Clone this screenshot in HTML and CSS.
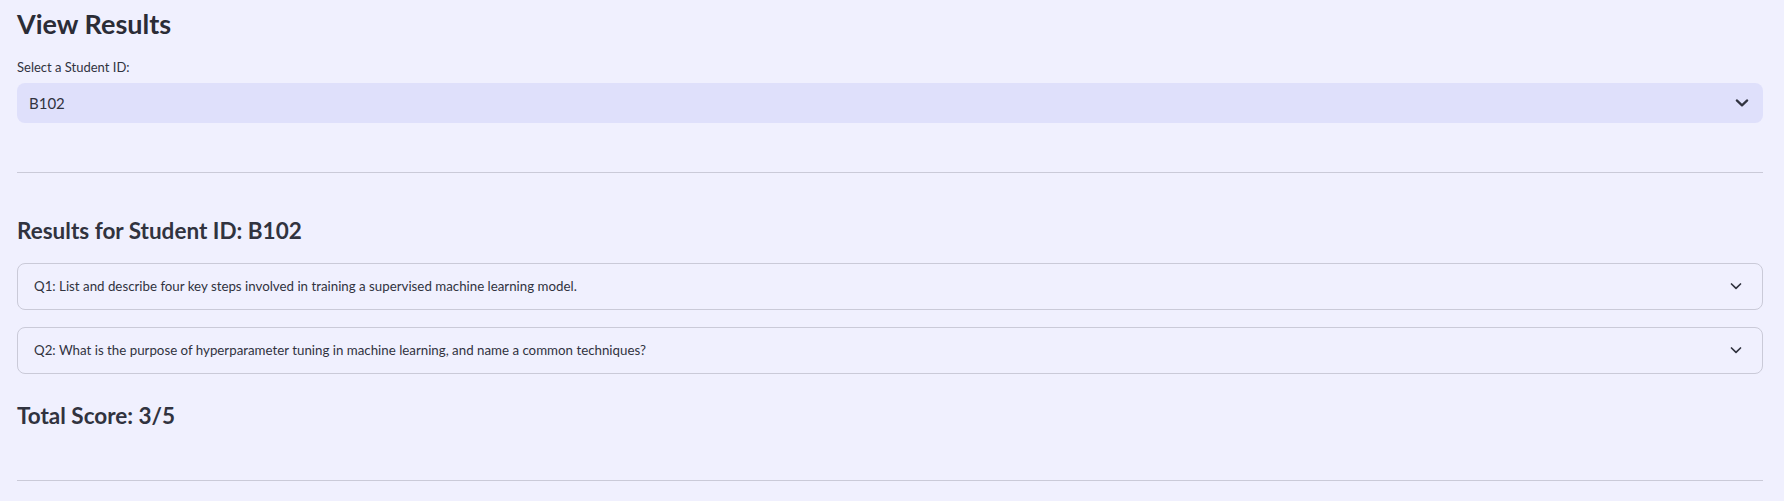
FILE: index.html
```html
<!DOCTYPE html>
<html lang="en">
<head>
<meta charset="utf-8">
<title>View Results</title>
<link rel="stylesheet" href="styles.css">
</head>
<body>
<main class="app">
  <h1 class="title">View Results</h1>
  <label class="field-label" for="student">Select a Student ID:</label>
  <div class="select" id="student">
    <span class="select-value">B102</span>
    <svg class="select-icon" width="20" height="20" viewBox="0 0 20 20" aria-hidden="true">
      <polyline points="4.8,7.4 10,12.4 15.2,7.4" fill="none" stroke="#31333f" stroke-width="2.2" stroke-linecap="round" stroke-linejoin="round"/>
    </svg>
  </div>
  <hr class="divider divider-top">
  <h2 class="heading results-heading">Results for Student ID: B102</h2>
  <div class="expander expander-first">
    <span class="expander-label">Q1: List and describe four key steps involved in training a supervised machine learning model.</span>
    <svg class="expander-icon" width="20" height="20" viewBox="0 0 20 20" aria-hidden="true">
      <polyline points="5.5,8 10,12.3 14.5,8" fill="none" stroke="#31333f" stroke-width="1.7" stroke-linecap="round" stroke-linejoin="round"/>
    </svg>
  </div>
  <div class="expander expander-next">
    <span class="expander-label">Q2: What is the purpose of hyperparameter tuning in machine learning, and name a common techniques?</span>
    <svg class="expander-icon" width="20" height="20" viewBox="0 0 20 20" aria-hidden="true">
      <polyline points="5.5,8 10,12.3 14.5,8" fill="none" stroke="#31333f" stroke-width="1.7" stroke-linecap="round" stroke-linejoin="round"/>
    </svg>
  </div>
  <h2 class="heading total-heading">Total Score: 3/5</h2>
  <hr class="divider divider-bottom">
</main>
</body>
</html>
```

FILE: styles.css
```css
html, body {
  margin: 0;
  padding: 0;
  background: #f0f0fe;
}

body {
  font-family: Lato, "Noto Sans", sans-serif;
  color: #31333f;
}

.app {
  display: flex;
  flex-direction: column;
  padding: 8px 21px 0 17px;
}

.title {
  margin: 0;
  font-size: 27px;
  font-weight: 700;
  line-height: 1.2;
  color: #2b2c36;
}

.field-label {
  margin-top: 20px;
  font-size: 13px;
  line-height: 1.2;
}

.select {
  margin-top: 7px;
  height: 40px;
  box-sizing: border-box;
  display: flex;
  align-items: center;
  justify-content: space-between;
  padding: 1px 11px 0 12px;
  background: #dfe0fb;
  border-radius: 8px;
}

.select-value {
  font-size: 15px;
  line-height: 1.2;
}

.select-icon {
  display: block;
}

.divider {
  margin: 0;
  border: 0;
  height: 1px;
  background: #cacad8;
}

.divider-top {
  margin-top: 49px;
}

.heading {
  margin: 0;
  font-size: 22.5px;
  font-weight: 700;
  line-height: 1.2;
}

.results-heading {
  margin-top: 44px;
}

.expander {
  height: 47px;
  box-sizing: border-box;
  display: flex;
  align-items: center;
  justify-content: space-between;
  padding: 0 16px;
  border: 1px solid #cacad8;
  border-radius: 8px;
}

.expander-first {
  margin-top: 19px;
}

.expander-next {
  margin-top: 17px;
}

.expander-label {
  font-size: 13.3px;
  line-height: 1.2;
}

.expander-icon {
  display: block;
}

.total-heading {
  margin-top: 28px;
}

.divider-bottom {
  margin-top: 51px;
}
```
